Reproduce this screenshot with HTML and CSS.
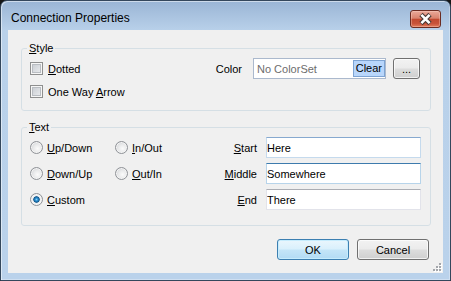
FILE: index.html
```html
<!DOCTYPE html>
<html>
  <head>
    <title>Connection Properties</title>
    <link rel="stylesheet" href="styles.css">
  </head>
  <body>
    <div class="window">
      <div class="titlebar">
        <span class="title">Connection Properties</span>
        <span class="close">
          <svg width="29" height="16" viewBox="0 0 29 16">
            <path d="M10 3.5 L19 12.5 M19 3.5 L10 12.5" stroke="#4a3a36" stroke-width="4.6" fill="none"/>
            <path d="M10.4 3.9 L18.6 12.1 M18.6 3.9 L10.4 12.1" stroke="#fff" stroke-width="2.6" fill="none"/>
          </svg>
        </span>
      </div>

      <div class="client">
        <fieldset class="group group-style">
          <legend><u>S</u>tyle</legend>
          <div class="row">
            <label class="check"><span class="box"></span><span><u>D</u>otted</span></label>
            <div class="color-pick">
              <span class="color-label">Color</span>
              <div class="color-field">
                <span class="color-value">No ColorSet</span>
                <span class="clear">Clear</span>
              </div>
              <button class="btn btn-more" type="button">...</button>
            </div>
          </div>
          <div class="row">
            <label class="check"><span class="box"></span><span>One Way <u>A</u>rrow</span></label>
          </div>
        </fieldset>

        <fieldset class="group group-text">
          <legend><u>T</u>ext</legend>
          <div class="text-grid">
            <label class="radio"><span class="dot"></span><span><u>U</u>p/Down</span></label>
            <label class="radio"><span class="dot"></span><span><u>I</u>n/Out</span></label>
            <span class="field-label"><u>S</u>tart</span>
            <input class="field field-hover" type="text" value="Here">

            <label class="radio"><span class="dot"></span><span><u>D</u>own/Up</span></label>
            <label class="radio"><span class="dot"></span><span><u>O</u>ut/In</span></label>
            <span class="field-label"><u>M</u>iddle</span>
            <input class="field field-focus" type="text" value="Somewhere">

            <label class="radio"><span class="dot dot-on"></span><span><u>C</u>ustom</span></label>
            <span></span>
            <span class="field-label"><u>E</u>nd</span>
            <input class="field" type="text" value="There">
          </div>
        </fieldset>

        <div class="actions">
          <button class="btn btn-default" type="button">OK</button>
          <button class="btn" type="button">Cancel</button>
        </div>

        <svg class="grip" width="10" height="10" viewBox="0 0 10 10">
          <g fill="#fff">
            <rect x="7" y="1" width="2" height="2"/>
            <rect x="4" y="4" width="2" height="2"/>
            <rect x="7" y="4" width="2" height="2"/>
            <rect x="1" y="7" width="2" height="2"/>
            <rect x="4" y="7" width="2" height="2"/>
            <rect x="7" y="7" width="2" height="2"/>
          </g>
          <g fill="#a3a6ab">
            <rect x="6" y="0" width="2" height="2"/>
            <rect x="3" y="3" width="2" height="2"/>
            <rect x="6" y="3" width="2" height="2"/>
            <rect x="0" y="6" width="2" height="2"/>
            <rect x="3" y="6" width="2" height="2"/>
            <rect x="6" y="6" width="2" height="2"/>
          </g>
        </svg>
      </div>
    </div>
  </body>
</html>
```

FILE: styles.css
```css
* {
  box-sizing: border-box;
}

body {
  margin: 0;
  background-color: #161616;
  font-family: "Liberation Sans", Arial, sans-serif;
  font-size: 11px;
  color: #000;
}

.window {
  width: 451px;
  height: 281px;
  border: 1px solid #34475c;
  border-radius: 7px 7px 0 0;
  background: linear-gradient(#9ab5d5, #b9d1ea 30px, #bad2eb);
  box-shadow: inset 1px 1px 0 rgba(255, 255, 255, 0.5), inset -1px -1px 0 rgba(255, 255, 255, 0.3);
  overflow: hidden;
}

.titlebar {
  display: flex;
  align-items: flex-start;
  height: 29px;
  padding: 9px 9px 0 10px;
}

.title {
  flex: 1;
  font-size: 12px;
  line-height: 16px;
}

.close {
  display: flex;
  width: 31px;
  height: 18px;
  border: 1px solid #6b2c22;
  border-radius: 3px;
  background: linear-gradient(#eaa99a, #d9836e 45%, #c24a31 52%, #c8533a 78%, #e27c5c);
  box-shadow: inset 0 0 0 1px rgba(255, 220, 210, 0.35);
}

.client {
  position: relative;
  height: 243px;
  margin: 0 7px;
  padding-top: 12px;
  background-color: #f0f0f0;
}

.group {
  margin: 0 12px 0 13px;
  border: 1px solid #d5dfe5;
  border-radius: 3px;
  min-width: 0;
}

.group legend {
  padding: 0 2px;
  margin-left: -3px;
  font-size: 11px;
  line-height: 13px;
}

.group-style {
  padding: 3px 10px 8px 8px;
}

.group-text {
  margin-top: 10px;
  padding: 3px 9px 15px 8px;
}

.row {
  display: flex;
  align-items: center;
  height: 21px;
}

.row + .row {
  margin-top: 2px;
}

.check {
  display: flex;
  align-items: center;
  gap: 5px;
}

.box {
  width: 13px;
  height: 13px;
  border: 1px solid #8e8f8f;
  background: linear-gradient(135deg, #c4c8ce, #eef0f2);
  box-shadow: inset 0 0 0 1px #f6f6f6, inset 0 0 0 2px #b9bdc2;
}

.color-pick {
  display: flex;
  align-items: center;
  margin-left: auto;
}

.color-label {
  margin-right: 11px;
}

.color-field {
  display: flex;
  align-items: center;
  justify-content: space-between;
  width: 133px;
  height: 21px;
  margin-right: 7px;
  padding-left: 3px;
  border: 1px solid #abb9cd;
  background-color: #fff;
}

.color-value {
  color: #6d6d6d;
}

.clear {
  height: 17px;
  line-height: 15px;
  padding: 0 2px;
  border: 1px solid #7ea4d3;
  background-color: #b8d6fb;
}

.btn {
  height: 21px;
  padding: 0;
  font: inherit;
  color: #000;
  border: 1px solid #707070;
  border-radius: 3px;
  background: linear-gradient(#f2f2f2, #ebebeb 48%, #dddddd 52%, #cfcfcf);
  box-shadow: inset 0 0 0 1px rgba(255, 255, 255, 0.7);
}

.btn-more {
  width: 27px;
}

.btn-default {
  border-color: #3c7fb1;
  background: linear-gradient(#eaf6fd, #d9f0fc 48%, #c4e5f8 52%, #b2dbf4);
  box-shadow: inset 0 0 0 1px #c6ecfd;
}

.text-grid {
  display: grid;
  grid-template-columns: 85px 1fr auto 155px;
  grid-auto-rows: 21px;
  row-gap: 5px;
  align-items: center;
}

.radio {
  display: flex;
  align-items: center;
  gap: 4px;
}

.dot {
  width: 13px;
  height: 13px;
  border-radius: 50%;
  border: 1px solid #8f9297;
  background: radial-gradient(circle at 60% 60%, #fbfbfb 0, #e8e9ea 45%, #c2c5ca 100%);
  box-shadow: inset 0 0 0 1px #f4f4f4;
}

.dot-on {
  background: radial-gradient(circle at 50% 50%, #8bd2f7 0, #2b8fd0 1.4px, #12578c 2.9px, #dfe3e6 3.5px, #f7f7f7 4.5px, #c2c5ca 100%);
}

.field-label {
  text-align: right;
  padding-right: 9px;
}

.field {
  width: 155px;
  height: 21px;
  padding: 0;
  font: inherit;
  color: #000;
  background-color: #fff;
  border: 1px solid #e2e3ea;
  border-top-color: #abadb3;
  outline: none;
}

.field-hover {
  border-color: #c5daed;
  border-top-color: #87a9cf;
}

.field-focus {
  border-color: #b7d4ea;
  border-top-color: #3d7bad;
}

.actions {
  display: flex;
  justify-content: flex-end;
  gap: 8px;
  margin: 13px 14px 0 0;
}

.actions .btn {
  width: 72px;
}

.grip {
  position: absolute;
  right: 0;
  bottom: 0;
}
```
